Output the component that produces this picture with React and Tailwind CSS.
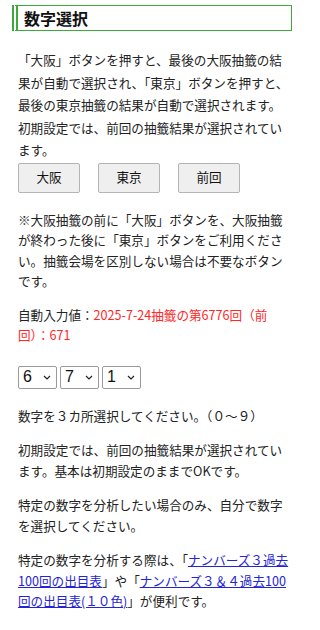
import { useState } from 'react'

const jp = { fontFamily: '"Noto Sans CJK JP", "Noto Sans", sans-serif' }

export default function App() {
  const [nums, setNums] = useState(['6', '7', '1'])

  function pick(i, value) {
    setNums((prev) => prev.map((n, j) => (j === i ? value : n)))
  }

  return (
    <div
      className="w-[300px] min-h-[630px] bg-white pb-6 text-[12.6px] text-[#222]"
      style={jp}
    >
      <h2 className="ml-[12px] mt-[5px] flex h-[26px] w-[280px] items-center border border-[#3cab3c] border-l-[6px] pl-[6px] text-[16px] font-bold leading-none text-[#111] [border-left-style:double]">
        数字選択
      </h2>

      <div className="ml-[18px] w-[273px]">
        <p className="mt-[18px] leading-[22.5px]">
          「大阪」ボタンを押すと、最後の大阪抽籤の結果が自動で選択され、「東京」ボタンを押すと、最後の東京抽籤の結果が自動で選択されます。初期設定では、前回の抽籤結果が選択されています。
        </p>

        <div className="mt-[1px] flex gap-[18px]">
          <Btn>大阪</Btn>
          <Btn>東京</Btn>
          <Btn>前回</Btn>
        </div>

        <p className="mt-[17px] leading-[20.5px]">
          ※大阪抽籤の前に「大阪」ボタンを、大阪抽籤が終わった後に「東京」ボタンをご利用ください。抽籤会場を区別しない場合は不要なボタンです。
        </p>

        <p className="mt-[13px] leading-[20.5px]">
          自動入力値：<span className="text-[#ff2626]">2025-7-24抽籤の第6776回（前回）：671</span>
        </p>

        <div className="mt-[20px] flex gap-[3px]">
          {nums.map((n, i) => (
            <NumSelect key={i} value={n} onChange={(v) => pick(i, v)} />
          ))}
        </div>

        <p className="mt-[17px] leading-[20.5px]">数字を３カ所選択してください。（０～９）</p>

        <p className="mt-[14px] leading-[20.5px]">
          初期設定では、前回の抽籤結果が選択されています。基本は初期設定のままでOKです。
        </p>

        <p className="mt-[14px] leading-[20.5px]">
          特定の数字を分析したい場合のみ、自分で数字を選択してください。
        </p>

        <p className="mt-[14px] leading-[20.5px]">
          特定の数字を分析する際は、「
          <a href="#" className="text-[#2323d8] underline">
            ナンバーズ３過去100回の出目表
          </a>
          」や「
          <a href="#" className="text-[#2323d8] underline">
            ナンバーズ３＆４過去100回の出目表(１０色)
          </a>
          」が便利です。
        </p>
      </div>
    </div>
  )
}

function Btn({ children }) {
  return (
    <button className="h-[30px] w-[62px] rounded-[2px] border border-[#b4b4b4] bg-[#efefef] text-[12.6px] text-[#111]">
      {children}
    </button>
  )
}

function NumSelect({ value, onChange }) {
  return (
    <div className="relative h-[23px] w-[39px]">
      <select
        value={value}
        onChange={(e) => onChange(e.target.value)}
        className="h-full w-full appearance-none rounded-[2px] border border-[#9a9a9a] bg-white pl-[4px] text-[16px] leading-none text-[#111]"
        style={{ fontFamily: '"Liberation Sans", Arial, sans-serif' }}
      >
        {['0', '1', '2', '3', '4', '5', '6', '7', '8', '9'].map((d) => (
          <option key={d} value={d}>
            {d}
          </option>
        ))}
      </select>
      <svg
        className="pointer-events-none absolute right-[6px] top-[9px]"
        width="8"
        height="5"
        viewBox="0 0 8 5"
      >
        <path d="M1 1l3 3 3-3" fill="none" stroke="#222" strokeWidth="1.2" />
      </svg>
    </div>
  )
}
